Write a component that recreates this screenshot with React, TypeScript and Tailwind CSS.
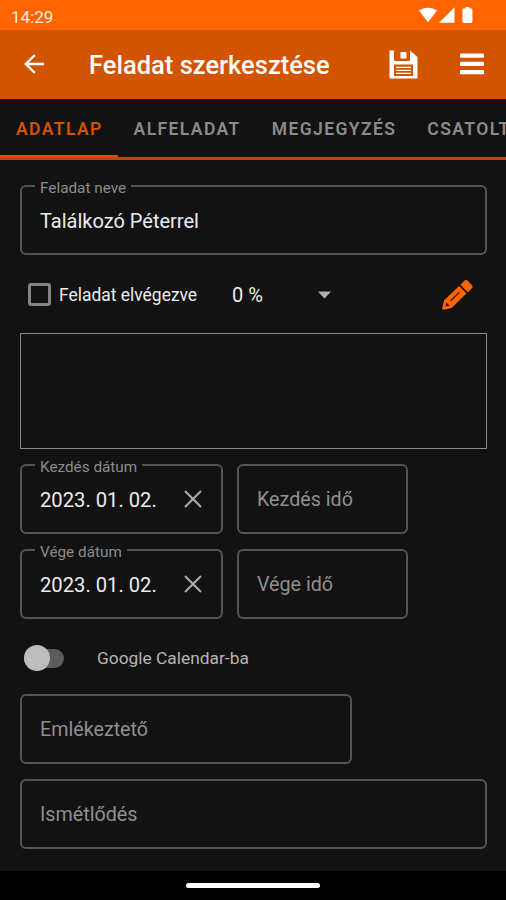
import type { ReactNode } from "react";
import { clsx } from "clsx";

const tabs = [
  { label: "ADATLAP", active: true },
  { label: "ALFELADAT" },
  { label: "MEGJEGYZÉS" },
  { label: "CSATOLT" },
];

function StatusBar() {
  return (
    <div className="h-[30px] shrink-0 bg-[#ff6400] flex items-center justify-between pl-[11px] pr-[31px] pt-[2px]">
      <span className="text-[17px] leading-none text-[#ffe9dc] pt-[2px]">14:29</span>
      <svg width="56" height="18" viewBox="0 0 56 18" fill="#fff">
        <path d="M0 3.600C5-0.300 13-0.300 18 3.600L9 15.200Z" />
        <path d="M35.500 0.200V15.700H20Z" />
        <path d="M46.300 0h4.200v1.500h1.500a1.400 1.400 0 0 1 1.400 1.400v11.700a1.400 1.400 0 0 1-1.400 1.400h-7.200a1.400 1.400 0 0 1-1.400-1.400V2.900a1.400 1.400 0 0 1 1.400-1.400h1.500z" />
      </svg>
    </div>
  );
}

function AppBar() {
  return (
    <header className="h-[69px] shrink-0 bg-[#d35400] flex items-center pl-6 pr-[22px] text-white">
      <svg width="21" height="20" viewBox="0 0 21 20" fill="none" stroke="currentColor" strokeWidth="2.300" className="-mt-px">
        <path d="M20 10H2M10.800 1.100L1.800 10l9 8.900" />
      </svg>
      <h1 className="ml-11 flex-1 text-[25.500px] leading-none font-medium whitespace-nowrap pt-[3px]">
        Feladat szerkesztése
      </h1>
      {/* Save */}
      <svg width="29" height="29" viewBox="0 0 29 29" className="mr-[42px] -mt-px">
        <path
          fill="currentColor"
          fillRule="evenodd"
          d="M1 0.500H5V9.500a1.500 1.500 0 0 0 1.500 1.500H19.500a1.500 1.500 0 0 0 1.500-1.500V0.500L28.500 7V27.500a1 1 0 0 1-1 1H1.500a1 1 0 0 1-1-1V1a.5.5 0 0 1 .5-.5ZM5 14.500V26H24V14.500ZM11.500 2H17.500V8.500H11.500Z"
        />
        <path d="M7 17.300H22M7 20.300H22M7 23.300H22" stroke="currentColor" strokeWidth="1.200" />
      </svg>
      <svg width="24" height="22" viewBox="0 0 24 22" fill="currentColor" className="-mt-px">
        <rect y="0.500" width="24" height="4.300" rx="1" />
        <rect y="8.700" width="24" height="4.300" rx="1" />
        <rect y="17" width="24" height="4.300" rx="1" />
      </svg>
    </header>
  );
}

function TabBar() {
  return (
    <nav className="h-[61px] shrink-0 flex overflow-hidden border-b-[3px] border-[#b9480f]">
      {tabs.map((tab) => (
        <div
          key={tab.label}
          className={clsx(
            "shrink-0 h-[61px] pl-4 pr-[15px] flex items-center text-[17.500px] font-semibold tracking-[1.400px]",
            tab.active ? "text-[#d35400] border-b-[5px] border-[#d9530f] pt-[5px]" : "text-[#8b8b8b]"
          )}
        >
          {tab.label}
        </div>
      ))}
    </nav>
  );
}

type FieldProps = {
  label?: string;
  placeholder?: string;
  className?: string;
  children?: ReactNode;
};

function Field({ label, placeholder, className, children }: FieldProps) {
  return (
    <div
      className={clsx(
        "relative h-[70px] shrink-0 rounded-[6px] border-2 border-[#545454] pl-[18px] flex items-center text-[20px]",
        className
      )}
    >
      {label && (
        <span className="absolute -top-[8px] left-[13px] px-[5px] bg-[#121212] text-[15.300px] leading-[18px] text-[#8c8c8c]">
          {label}
        </span>
      )}
      {placeholder ? <span className="text-[19.700px] text-[#8f8f8f] pt-[2px]">{placeholder}</span> : children}
    </div>
  );
}

function DateRow({ label, timeLabel }: { label: string; timeLabel: string }) {
  return (
    <div className="flex gap-[14px]">
      <Field label={label} className="w-[203px]">
        <span className="text-[20.200px] text-[#ececec] pt-[2px]">2023. 01. 02.</span>
        <svg width="18" height="18" viewBox="0 0 18 18" className="ml-[27px]" stroke="#ababab" strokeWidth="2.100">
          <path d="M1 1l16 16M17 1L1 17" />
        </svg>
      </Field>
      <Field placeholder={timeLabel} className="w-[171px]" />
    </div>
  );
}

function Pencil() {
  return (
    <svg width="31" height="31" viewBox="0 0 31 31">
      {/* drawn lying flat with its tip at the origin */}
      <g transform="translate(0.500 30.300) rotate(-44)">
        <path d="M0.800 -1.300L7.500 -5.300H28.200V5.300H7.500L0.800 1.300A1.500 1.500 0 0 1 0.800 -1.300Z" fill="#ff6400" />
        <path d="M30 -5.300H35.500A2.500 2.500 0 0 1 38 -2.800V2.800A2.500 2.500 0 0 1 35.500 5.300H30Z" fill="#ff6400" />
        <path d="M11.500 -0.500H24" stroke="#4a2006" strokeWidth="1.500" />
        <path d="M4.300 0L7.600 -2.600V2.600Z" fill="#2b1507" />
      </g>
    </svg>
  );
}

export default function App() {
  return (
    <div className="w-[506px] h-[900px] bg-[#121212] flex flex-col overflow-hidden font-[Roboto,sans-serif]">
      <StatusBar />
      <AppBar />
      <TabBar />

      <main className="flex-1 pl-5 pr-[19px] pt-[25px] flex flex-col">
        <Field label="Feladat neve">
          <span className="text-[#ececec] pt-[2px]">Találkozó Péterrel</span>
        </Field>

        <div className="h-[78px] shrink-0 flex items-center pl-2 pr-[14px] pt-[1px]">
          <div className="size-[23px] border-[3px] border-[#858585] rounded-[3px]" />
          <span className="ml-2 w-[138px] whitespace-nowrap text-[17.450px] text-[#ececec] pt-[2px]">Feladat elvégezve</span>
          <span className="ml-[35px] w-8 whitespace-nowrap text-[20px] text-[#ececec] pt-px">0 %</span>
          <svg width="13" height="8" viewBox="0 0 13 8" className="ml-[54px]" fill="#b0b0b0">
            <path d="M0 0.500h13L6.500 7.500z" />
          </svg>
          <div className="ml-auto">
            <Pencil />
          </div>
        </div>

        <div className="h-[116px] shrink-0 border border-[#8a8a8a]" />

        <div className="mt-[15px] flex flex-col gap-[15px]">
          <DateRow label="Kezdés dátum" timeLabel="Kezdés idő" />
          <DateRow label="Vége dátum" timeLabel="Vége idő" />
        </div>

        {/* Calendar sync */}
        <div className="h-[75px] shrink-0 flex items-center pl-1 pt-[3px]">
          <div className="w-10 h-[19px] rounded-full bg-[#5c5c5c] flex items-center">
            <div className="size-[26px] shrink-0 rounded-full bg-[#bdbdbd]" />
          </div>
          <span className="ml-[33px] text-[17.350px] text-[#b5b5b5] pt-px">Google Calendar-ba</span>
        </div>

        <Field placeholder="Emlékeztető" className="w-[332px]" />
        <Field placeholder="Ismétlődés" className="mt-[15px]" />
      </main>

      <div className="h-[29px] shrink-0 bg-black flex justify-center pt-3">
        <div className="w-[134px] h-[5px] rounded-full bg-white" />
      </div>
    </div>
  );
}
